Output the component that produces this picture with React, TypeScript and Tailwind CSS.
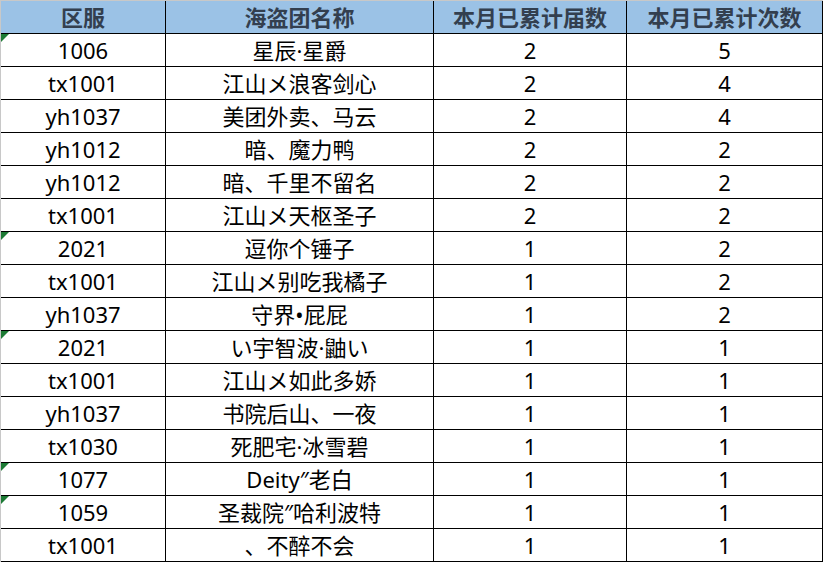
const rows: [string, string, number, number, boolean][] = [
  ["1006", "星辰·星爵", 2, 5, true],
  ["tx1001", "江山メ浪客剑心", 2, 4, false],
  ["yh1037", "美团外卖、马云", 2, 4, false],
  ["yh1012", "暗、魔力鸭", 2, 2, false],
  ["yh1012", "暗、千里不留名", 2, 2, false],
  ["tx1001", "江山メ天枢圣子", 2, 2, false],
  ["2021", "逗你个锤子", 1, 2, true],
  ["tx1001", "江山メ别吃我橘子", 1, 2, false],
  ["yh1037", "守界•屁屁", 1, 2, false],
  ["2021", "い宇智波·鼬い", 1, 1, true],
  ["tx1001", "江山メ如此多娇", 1, 1, false],
  ["yh1037", "书院后山、一夜", 1, 1, false],
  ["tx1030", "死肥宅·冰雪碧", 1, 1, false],
  ["1077", "Deity\u2033老白", 1, 1, true],
  ["1059", "圣裁院\u2033哈利波特", 1, 1, true],
  ["tx1001", "、不醉不会", 1, 1, false],
];

const cols = ["w-[165px]", "w-[268px]", "w-[193px]", "w-[196px]"];

export default function App() {
  return (
    <div
      className="w-[824px] h-[562px] bg-white overflow-hidden"
      style={{ fontFamily: '"Noto Sans", "Noto Sans CJK SC", sans-serif' }}
    >
      <div className="border-t border-l border-[#c8c8c8] w-fit">
        {/* Header */}
        <div className="flex h-[33px] bg-[#9bc2e6] text-[#333f4f] font-bold text-[22px]">
          {["区服", "海盗团名称", "本月已累计届数", "本月已累计次数"].map((h, i) => (
            <div
              key={h}
              className={`${cols[i]} flex items-center justify-center border-r border-b border-black leading-none pb-px`}
            >
              {h}
            </div>
          ))}
        </div>

        {rows.map(([zone, name, a, b, mark], idx) => (
          <div key={idx} className="flex h-[33px] text-[22px] text-black">
            <div className={`${cols[0]} relative flex items-center justify-center border-r border-b border-black leading-none pb-px`}>
              {mark && (
                <span className="absolute left-0 top-0 w-0 h-0 border-t-[8px] border-t-[#1d7b35] border-r-[8px] border-r-transparent" />
              )}
              {zone}
            </div>
            <div className={`${cols[1]} flex items-center justify-center border-r border-b border-black leading-none pb-px`}>
              {name}
            </div>
            <div className={`${cols[2]} flex items-center justify-center border-r border-b border-black leading-none pb-px`}>
              {a}
            </div>
            <div className={`${cols[3]} flex items-center justify-center border-r border-b border-black leading-none pb-px`}>
              {b}
            </div>
          </div>
        ))}
      </div>
    </div>
  );
}
